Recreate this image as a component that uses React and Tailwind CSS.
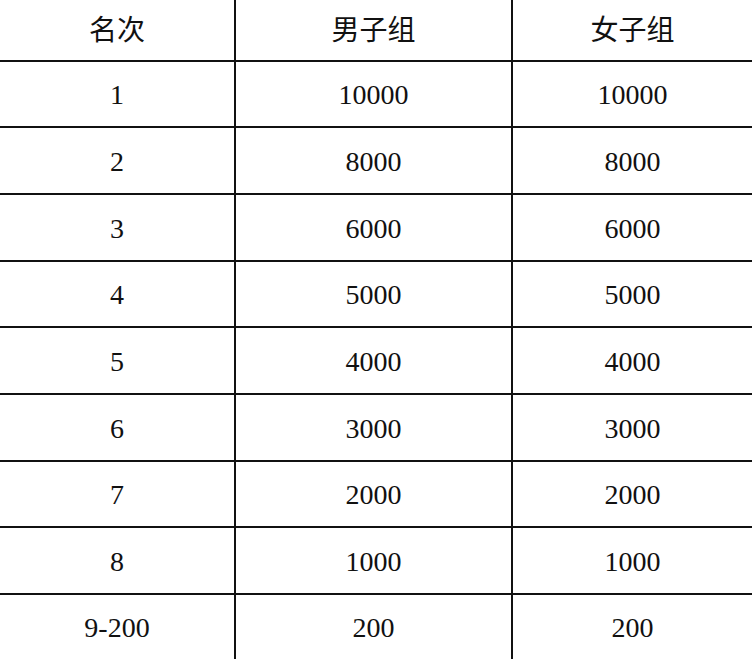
import React from 'react';

const rows = [
  ['1', '10000', '10000', 'h-[66px]'],
  ['2', '8000', '8000', 'h-[67px]'],
  ['3', '6000', '6000', 'h-[67px]'],
  ['4', '5000', '5000', 'h-[66px]'],
  ['5', '4000', '4000', 'h-[67px]'],
  ['6', '3000', '3000', 'h-[67px]'],
  ['7', '2000', '2000', 'h-[66px]'],
  ['8', '1000', '1000', 'h-[67px]'],
];

const cols = ['w-[236px] border-r-2', 'w-[277px] border-r-2', 'flex-1'];

const Row = ({ cells, height, last, header }) => (
  <div className={`flex ${height} ${last ? '' : 'border-b-2'} border-[#111]`}>
    {cells.map((c, i) => (
      <div
        key={i}
        className={`${cols[i]} border-[#111] flex items-center justify-center ${
          header
            ? "text-[28px] font-['Noto_Sans_CJK_SC',sans-serif] pb-[4px]"
            : "text-[28px] font-['Liberation_Serif','Noto_Serif_CJK_SC',serif] pt-[2px]"
        }`}
      >
        {c}
      </div>
    ))}
  </div>
);

export default function App() {
  return (
    <div className="w-[752px] h-[659px] bg-white text-[#111] overflow-hidden">
      <Row header cells={['名次', '男子组', '女子组']} height="h-[62px]" />
      {rows.map(([a, b, c, h]) => (
        <Row key={a} cells={[a, b, c]} height={h} />
      ))}
      <Row last cells={['9-200', '200', '200']} height="h-[64px]" />
    </div>
  );
}
